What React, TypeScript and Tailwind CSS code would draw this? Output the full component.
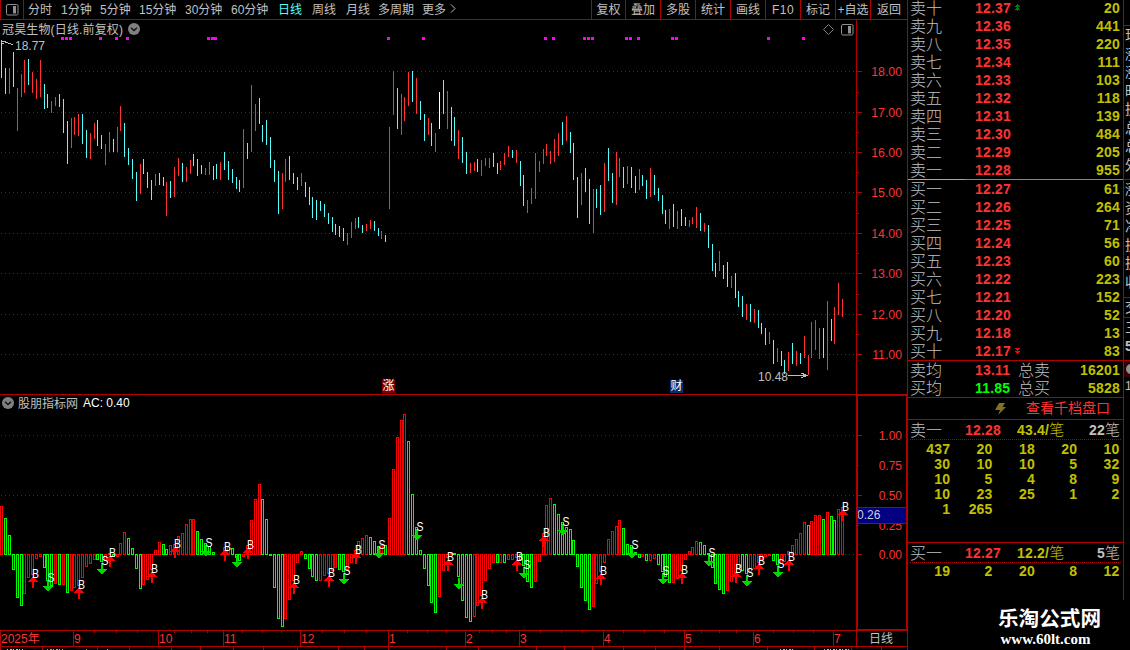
import { Fragment } from "react";
import clsx from "clsx";

type Tone = "r" | "g" | "c" | "w";

// [x, high, low, tone, ac level]; tone = candle colour, last field = histogram colour
type Bar = [number, number, number, Tone, number, "r" | "g"];

const BARS: Bar[] = [
  [1, 40, 78, "c", 506, "r"], [5, 68, 94, "c", 518, "g"], [9, 68, 94, "r", 535, "g"],
  [13, 52, 87, "c", 569, "g"], [17, 88, 131, "r", 597, "g"], [21, 74, 97, "r", 605, "g"],
  [24, 60, 93, "r", 593, "r"], [28, 59, 85, "c", 577, "r"], [32, 72, 93, "r", 574, "r"],
  [36, 79, 99, "r", 558, "r"], [40, 60, 97, "r", 556, "r"], [44, 84, 109, "c", 567, "g"],
  [47, 94, 108, "c", 580, "g"], [51, 101, 113, "r", 585, "g"], [55, 97, 106, "r", 583, "r"],
  [59, 94, 107, "c", 584, "g"], [63, 99, 133, "c", 584, "r"], [67, 121, 164, "c", 592, "g"],
  [71, 118, 148, "r", 590, "r"], [74, 117, 135, "r", 587, "r"], [78, 114, 136, "r", 585, "r"],
  [82, 114, 144, "c", 577, "r"], [86, 130, 158, "c", 566, "r"], [90, 133, 159, "r", 563, "r"],
  [94, 123, 139, "r", 559, "r"], [97, 120, 146, "c", 559, "g"], [101, 135, 149, "c", 561, "g"],
  [105, 144, 165, "r", 560, "r"], [109, 132, 152, "r", 553, "r"], [113, 139, 152, "c", 556, "g"],
  [117, 127, 152, "r", 556, "r"], [120, 106, 131, "r", 543, "r"], [124, 123, 157, "c", 532, "r"],
  [128, 148, 165, "c", 538, "g"], [132, 159, 179, "c", 548, "g"], [136, 172, 201, "c", 568, "g"],
  [140, 164, 194, "r", 588, "g"], [143, 159, 174, "c", 584, "r"], [147, 172, 188, "c", 579, "r"],
  [151, 180, 200, "c", 569, "r"], [155, 174, 186, "r", 550, "r"], [159, 173, 185, "c", 542, "r"],
  [163, 177, 186, "c", 544, "g"], [166, 182, 216, "r", 549, "g"], [170, 181, 198, "c", 545, "r"],
  [174, 167, 197, "r", 544, "r"], [178, 158, 176, "r", 536, "r"], [182, 163, 182, "c", 533, "r"],
  [186, 167, 182, "r", 524, "r"], [190, 160, 174, "r", 519, "r"], [193, 154, 166, "c", 519, "r"],
  [197, 159, 176, "c", 531, "g"], [201, 165, 174, "c", 539, "g"], [205, 168, 175, "r", 543, "g"],
  [209, 162, 175, "r", 546, "g"], [213, 166, 180, "c", 552, "g"], [216, 164, 179, "c", 554, "g"],
  [220, 162, 180, "r", 554, "r"], [224, 152, 170, "c", 547, "r"], [228, 161, 180, "c", 546, "r"],
  [232, 169, 183, "c", 548, "g"], [236, 177, 189, "c", 557, "g"], [239, 180, 192, "c", 560, "g"],
  [243, 129, 188, "r", 556, "r"], [247, 143, 159, "c", 545, "r"], [251, 85, 152, "r", 520, "r"],
  [255, 104, 131, "r", 499, "r"], [259, 98, 124, "c", 484, "r"], [262, 125, 142, "c", 499, "g"],
  [266, 120, 145, "c", 519, "g"], [270, 137, 168, "c", 555, "g"], [274, 160, 182, "c", 587, "g"],
  [278, 171, 214, "c", 618, "g"], [282, 173, 209, "r", 626, "g"], [285, 159, 182, "r", 618, "r"],
  [289, 156, 180, "c", 599, "r"], [293, 173, 184, "c", 580, "r"], [297, 177, 190, "c", 562, "r"],
  [301, 173, 186, "r", 551, "r"], [305, 182, 197, "c", 558, "g"], [309, 187, 205, "c", 568, "g"],
  [312, 197, 218, "c", 576, "g"], [316, 200, 220, "c", 580, "g"], [320, 201, 211, "c", 580, "r"],
  [324, 204, 217, "c", 575, "r"], [328, 213, 224, "c", 573, "r"], [332, 217, 232, "c", 570, "r"],
  [335, 224, 235, "c", 567, "r"], [339, 226, 237, "c", 569, "g"], [343, 228, 241, "c", 571, "g"],
  [347, 233, 245, "r", 569, "r"], [351, 222, 238, "r", 562, "r"], [355, 218, 229, "r", 550, "r"],
  [358, 217, 228, "c", 541, "r"], [362, 225, 233, "c", 538, "r"], [366, 224, 231, "r", 535, "r"],
  [370, 220, 229, "r", 537, "g"], [374, 221, 231, "c", 541, "g"], [378, 228, 236, "c", 546, "g"],
  [381, 231, 239, "r", 545, "r"], [385, 235, 242, "c", 545, "g"], [389, 127, 209, "r", 518, "r"],
  [393, 71, 115, "r", 469, "r"], [397, 88, 129, "c", 437, "r"], [401, 94, 135, "r", 420, "r"],
  [404, 97, 121, "r", 414, "r"], [408, 72, 106, "r", 441, "g"], [412, 71, 102, "c", 494, "g"],
  [416, 78, 114, "r", 527, "g"], [420, 101, 120, "c", 550, "g"], [424, 114, 141, "c", 568, "g"],
  [428, 118, 135, "r", 585, "g"], [431, 123, 146, "c", 602, "g"], [435, 133, 152, "r", 612, "g"],
  [439, 92, 129, "w", 596, "r"], [443, 80, 114, "c", 570, "r"], [447, 91, 129, "r", 557, "r"],
  [451, 107, 141, "c", 553, "r"], [454, 117, 146, "c", 553, "g"], [458, 130, 159, "r", 576, "g"],
  [462, 137, 163, "c", 600, "g"], [466, 152, 174, "c", 617, "g"], [470, 163, 173, "r", 621, "g"],
  [474, 162, 171, "r", 616, "r"], [477, 159, 172, "c", 605, "r"], [481, 160, 176, "r", 595, "r"],
  [485, 158, 166, "r", 580, "r"], [489, 158, 168, "r", 568, "r"], [493, 153, 167, "c", 562, "r"],
  [497, 163, 174, "c", 562, "g"], [500, 161, 170, "r", 562, "r"], [504, 153, 165, "r", 562, "g"],
  [508, 146, 157, "r", 559, "r"], [512, 150, 158, "c", 559, "r"], [516, 150, 163, "r", 557, "r"],
  [520, 161, 186, "c", 559, "g"], [523, 175, 206, "c", 565, "g"], [527, 200, 213, "r", 581, "g"],
  [531, 188, 204, "r", 587, "g"], [535, 153, 199, "r", 581, "r"], [539, 161, 172, "r", 561, "r"],
  [543, 149, 164, "r", 533, "r"], [546, 144, 156, "r", 505, "r"], [550, 151, 164, "r", 498, "r"],
  [554, 139, 162, "r", 504, "g"], [558, 133, 156, "r", 514, "g"], [562, 122, 145, "c", 522, "g"],
  [566, 116, 141, "r", 527, "g"], [570, 132, 153, "c", 529, "g"], [573, 143, 180, "c", 540, "g"],
  [577, 177, 218, "c", 566, "g"], [581, 173, 205, "r", 587, "g"], [585, 168, 192, "c", 600, "g"],
  [589, 179, 224, "c", 609, "g"], [593, 189, 233, "r", 606, "r"], [596, 189, 208, "c", 583, "r"],
  [600, 185, 215, "c", 571, "r"], [604, 163, 212, "r", 562, "r"], [608, 148, 181, "c", 539, "r"],
  [612, 173, 203, "c", 531, "r"], [616, 152, 205, "r", 526, "r"], [619, 158, 177, "r", 520, "r"],
  [623, 167, 188, "c", 528, "g"], [627, 166, 184, "r", 544, "g"], [631, 167, 188, "c", 545, "g"],
  [635, 176, 193, "c", 552, "g"], [639, 169, 190, "r", 557, "g"], [642, 175, 186, "c", 556, "r"],
  [646, 180, 199, "c", 560, "g"], [650, 168, 197, "r", 560, "r"], [654, 175, 195, "c", 558, "r"],
  [658, 188, 201, "c", 564, "g"], [662, 195, 214, "c", 571, "g"], [665, 210, 224, "c", 576, "g"],
  [669, 209, 229, "r", 582, "g"], [673, 204, 227, "c", 582, "r"], [677, 211, 229, "r", 578, "r"],
  [681, 209, 226, "c", 570, "r"], [685, 217, 226, "c", 559, "r"], [689, 220, 227, "r", 551, "r"],
  [692, 217, 224, "r", 547, "r"], [696, 207, 228, "r", 541, "r"], [700, 213, 231, "c", 542, "g"],
  [704, 223, 232, "r", 545, "g"], [708, 225, 248, "c", 553, "g"], [712, 244, 271, "c", 567, "g"],
  [715, 263, 277, "c", 583, "g"], [719, 251, 271, "r", 589, "g"], [723, 265, 279, "c", 593, "g"],
  [727, 262, 287, "c", 590, "r"], [731, 276, 288, "r", 581, "r"], [735, 273, 298, "c", 573, "r"],
  [738, 291, 307, "c", 569, "r"], [742, 296, 317, "c", 570, "g"], [746, 304, 320, "r", 573, "g"],
  [750, 304, 322, "c", 571, "r"], [754, 309, 323, "r", 568, "r"], [758, 310, 328, "c", 562, "r"],
  [761, 323, 334, "c", 559, "r"], [765, 328, 345, "c", 556, "r"], [769, 332, 344, "r", 555, "r"],
  [773, 340, 364, "c", 560, "g"], [777, 348, 362, "r", 564, "g"], [781, 351, 366, "c", 563, "r"],
  [784, 360, 374, "c", 561, "r"], [788, 352, 371, "r", 551, "r"], [792, 343, 364, "c", 545, "r"],
  [796, 351, 366, "r", 539, "r"], [800, 353, 364, "c", 533, "r"], [804, 336, 358, "r", 522, "r"],
  [808, 355, 375, "r", 525, "g"], [811, 322, 358, "r", 521, "r"], [815, 320, 350, "r", 515, "r"],
  [819, 328, 359, "r", 515, "r"], [823, 328, 358, "c", 519, "g"], [827, 301, 370, "r", 512, "r"],
  [831, 319, 341, "c", 516, "g"], [834, 307, 344, "r", 520, "g"], [838, 283, 315, "r", 509, "r"],
  [842, 299, 317, "r", 507, "r"],
];

const ZERO = 554;

const FILL: Record<Tone, string> = { r: "#ff3232", g: "#00ff00", c: "#54fcfc", w: "#ffffff" };

const BUYS = [
  [33, 576], [79, 587], [110, 555], [152, 571], [175, 546], [225, 549], [248, 547],
  [294, 582], [329, 575], [356, 552], [448, 559], [482, 597], [517, 559], [544, 535],
  [601, 573], [682, 572], [736, 571], [759, 563], [789, 559], [843, 509],
];

// third value: whether the S letter is shown
const SELLS: [number, number, boolean][] = [
  [48, 592, true], [102, 575, true], [206, 557, true], [237, 568, false], [344, 585, true],
  [379, 559, true], [417, 541, true], [459, 590, false], [524, 579, true], [563, 536, true],
  [632, 559, true], [663, 585, true], [709, 567, true], [747, 587, true], [778, 578, true],
];

const DOTS = [
  61, 65, 69, 99, 115, 126, 207, 211, 214, 387, 422, 544, 552, 583, 587, 591, 625, 629, 637,
  671, 675, 767, 802,
];

const PRICE_TICKS: [number, string][] = [
  [71, "18.00"], [112, "17.00"], [152, "16.00"], [192, "15.00"],
  [233, "14.00"], [273, "13.00"], [314, "12.00"], [354, "11.00"],
];
const PRICE_MINOR = [92, 132, 172, 213, 253, 294, 334];

const AC_TICKS: [number, string][] = [
  [435, "1.00"], [465, "0.75"], [495, "0.50"], [525, "0.25"], [554, "0.00"],
];

const MONTHS: [number, string][] = [
  [73, "9"], [158, "10"], [223, "11"], [300, "12"], [388, "1"], [465, "2"],
  [519, "3"], [603, "4"], [684, "5"], [753, "6"], [833, "7"],
];
const WEEKS = [
  94, 116, 137, 174, 191, 207, 242, 262, 281, 322, 344, 366, 407, 427, 446, 479, 492, 506,
  540, 561, 582, 623, 644, 664, 701, 719, 736, 773, 793, 813,
];
const TAB_SEPS = [
  42, 97, 129, 171, 200, 233, 263, 297, 338, 364, 388, 446, 478, 536, 564, 592, 623, 655,
  684, 719, 767, 814, 851, 881,
];

const PERIODS = [
  { label: "分时", w: "w-[33px]" },
  { label: "1分钟", w: "w-[39px]" },
  { label: "5分钟", w: "w-[39px]" },
  { label: "15分钟", w: "w-[46px]" },
  { label: "30分钟", w: "w-[46px]" },
  { label: "60分钟", w: "w-[47px]" },
  { label: "日线", w: "w-[34px]", active: true },
  { label: "周线", w: "w-[34px]" },
  { label: "月线", w: "w-[32px]" },
  { label: "多周期", w: "w-[44px]" },
  { label: "更多", w: "w-[28px]" },
];

const TOOLS = [
  { label: "复权", w: "w-[34px]" },
  { label: "叠加", w: "w-[35px]" },
  { label: "多股", w: "w-[35px]" },
  { label: "统计", w: "w-[35px]" },
  { label: "画线", w: "w-[35px]" },
  { label: "F10", w: "w-[35px] tracking-[0.5px]" },
  { label: "标记", w: "w-[35px]" },
  { label: "+自选", w: "w-[35px]" },
  { label: "返回", w: "w-[37px]" },
];

const ASKS = [
  ["卖十", "12.37", "20"], ["卖九", "12.36", "441"], ["卖八", "12.35", "220"],
  ["卖七", "12.34", "111"], ["卖六", "12.33", "103"], ["卖五", "12.32", "118"],
  ["卖四", "12.31", "139"], ["卖三", "12.30", "484"], ["卖二", "12.29", "205"],
  ["卖一", "12.28", "955"],
];

const BIDS = [
  ["买一", "12.27", "61"], ["买二", "12.26", "264"], ["买三", "12.25", "71"],
  ["买四", "12.24", "56"], ["买五", "12.23", "60"], ["买六", "12.22", "223"],
  ["买七", "12.21", "152"], ["买八", "12.20", "52"], ["买九", "12.18", "13"],
  ["买十", "12.17", "83"],
];

const ASK_QUEUE = [
  "437", "20", "18", "20", "10",
  "30", "10", "10", "5", "32",
  "10", "5", "4", "8", "9",
  "10", "23", "25", "1", "2",
  "1", "265",
];
const BID_QUEUE = ["19", "2", "20", "8", "12"];

const NUM = "font-['Liberation_Sans'] text-[14px] font-bold tracking-[0.2px]";
const LABEL = "pt-0.5 text-[16px] font-light text-[#c0c0c0]";
const AXIS_FONT = "'Liberation Sans', sans-serif";

function GridLine({ y }: { y: number }) {
  return (
    <line x1="1" x2="856" y1={y + 0.5} y2={y + 0.5} stroke="#b00000" strokeDasharray="1 3" />
  );
}

function PanelIcon() {
  return (
    <svg width="13" height="12" viewBox="0 0 13 12" fill="none">
      <rect x="0.5" y="0.5" width="11.5" height="10.5" rx="1.5" stroke="#909090" />
      <rect x="7" y="2" width="3" height="7.5" fill="#909090" />
    </svg>
  );
}

function Collapse() {
  return (
    <svg width="12" height="12" viewBox="0 0 12 12">
      <circle cx="6" cy="6" r="6" fill="#808080" />
      <path d="M3 4.8 6 7.6 9 4.8" fill="none" stroke="#101010" strokeWidth="1.4" />
    </svg>
  );
}

function Toolbar() {
  return (
    <div className="flex h-5 shrink-0 border-b border-[#b00000] text-[12px] leading-[20px] text-[#c0c0c0]">
      <div className="flex w-6 items-center justify-center border-x border-[#b00000]">
        <PanelIcon />
      </div>
      <div className="flex pl-1">
        {PERIODS.map((p) => (
          <span
            key={p.label}
            className={clsx("shrink-0 whitespace-nowrap", p.w, p.active && "text-[#54fcfc]")}
          >
            {p.label}
          </span>
        ))}
        <svg width="6" height="19" viewBox="0 0 6 19" fill="none" stroke="#c0c0c0">
          <path d="M1 4.5 5 8.5 1 12.5" />
        </svg>
      </div>
      <div className="ml-auto flex h-[19px]">
        {TOOLS.map((t) => (
          <span
            key={t.label}
            className={clsx("shrink-0 whitespace-nowrap border-l border-[#b00000] text-center", t.w)}
          >
            {t.label}
          </span>
        ))}
      </div>
    </div>
  );
}

function PriceChart() {
  return (
    <div className="relative h-[375px] shrink-0">
      <svg width="907" height="375" viewBox="0 20 907 375" shapeRendering="crispEdges">
        {PRICE_TICKS.map(([y, label]) => (
          <Fragment key={label}>
            <GridLine y={y} />
            <rect x="857" y={y} width="5" height="1" fill="#b00000" />
            <text
              x="902"
              y={y + 5}
              textAnchor="end"
              fontFamily={AXIS_FONT}
              fontSize="12.3"
              fill="#ff3232"
            >
              {label}
            </text>
          </Fragment>
        ))}
        {PRICE_MINOR.map((y) => (
          <rect key={y} x="857" y={y} width="2" height="1" fill="#b00000" />
        ))}
        {DOTS.map((x) => (
          <rect key={x} x={x} y="37" width="3" height="3" fill="#ff00ff" />
        ))}
        {BARS.map(([x, hi, lo, tone]) => (
          <rect key={x} x={x} y={hi} width="1" height={lo - hi} fill={FILL[tone]} />
        ))}
        <rect x="856" y="20" width="1" height="375" fill="#b00000" />
        <rect x="0" y="394" width="907" height="1" fill="#b00000" />

        <g fill="none" stroke="#c0c0c0">
          <path d="M1.5 41.5h4M1.5 43.5h2M5 42l4 1.5 4 1" />
          <path d="M788 375.5h18M801 373l6 2.5-6 2.5" />
        </g>
        <g fontFamily={AXIS_FONT} fontSize="12" fill="#c0c0c0">
          <text x="15" y="50">18.77</text>
          <text x="758" y="381">10.48</text>
        </g>
        <path
          d="M828.5 24.5l5 5-5 5-5-5z"
          fill="none"
          stroke="#808080"
          shapeRendering="auto"
        />
      </svg>
      <div className="absolute left-[2px] top-0 flex h-[18px] items-center gap-1.5 text-[12px] text-[#c0c0c0]">
        <span className="w-[120px] whitespace-nowrap pt-px tracking-[0.15px]">
          冠昊生物(日线.前复权)
        </span>
        <Collapse />
      </div>
      <div className="absolute left-[841px] top-1">
        <PanelIcon />
      </div>
      <span className="absolute left-[382px] top-[360px] h-[13px] w-[13px] bg-[#800000] text-center text-[12px] leading-[13px] text-white">
        涨
      </span>
      <span className="absolute left-[670px] top-[360px] h-[13px] w-[13px] bg-[#003070] text-center text-[12px] leading-[13px] text-white">
        财
      </span>
    </div>
  );
}

function AcChart() {
  return (
    <div className="relative h-[235px] shrink-0">
      <svg width="907" height="235" viewBox="0 395 907 235" shapeRendering="crispEdges">
        <GridLine y={435} />
        <GridLine y={495} />
        <GridLine y={554} />
        {BARS.map(([x, , , , level, tone]) => (
          <rect
            key={x}
            x={x - 0.5}
            y={Math.min(level, ZERO) + 0.5}
            width="2"
            height={Math.abs(level - ZERO)}
            fill="#000"
            stroke={tone === "r" ? "#ff0000" : "#00ff00"}
          />
        ))}
        {BUYS.map(([x, y]) => (
          <g key={x} fill="#ff0000">
            <path d={`M${x} ${y}l5 6h-10z`} />
            <rect x={x - 1} y={y + 5} width="2" height="7" />
          </g>
        ))}
        {SELLS.map(([x, y]) => (
          <g key={x} fill="#00d800">
            <path d={`M${x} ${y}l5 -6h-10z`} />
            <rect x={x - 1} y={y - 12} width="2" height="7" />
          </g>
        ))}
        <g fontFamily={AXIS_FONT} fontSize="12" fill="#ffffff">
          {BUYS.map(([x, y]) => (
            <text key={x} x={x - 1} y={y + 2} textLength="7" lengthAdjust="spacingAndGlyphs">
              B
            </text>
          ))}
          {SELLS.filter((s) => s[2]).map(([x, y]) => (
            <text key={x} x={x - 0.5} y={y - 10} textLength="7" lengthAdjust="spacingAndGlyphs">
              S
            </text>
          ))}
        </g>

        {AC_TICKS.map(([y, label], i) => (
          <Fragment key={label}>
            <rect x="858" y={y} width={i % 2 ? 1 : 4} height="1" fill="#b00000" />
            <text
              x="902"
              y={y + 5}
              textAnchor="end"
              fontFamily={AXIS_FONT}
              fontSize="12"
              fill="#ff3232"
            >
              {label}
            </text>
          </Fragment>
        ))}
        <rect x="857" y="507" width="50" height="17" fill="#b00000" />
        <rect x="858" y="508" width="48" height="15" fill="#000080" />
        <text x="857" y="519" fontFamily={AXIS_FONT} fontSize="12" fill="#d0d0d0">
          0.26
        </text>
        <rect x="856" y="395" width="2" height="235" fill="#b00000" />
        <rect x="906" y="395" width="1" height="235" fill="#b00000" />
        <rect x="856" y="395" width="51" height="1" fill="#b00000" />
        <rect x="856" y="629" width="51" height="1" fill="#b00000" />
      </svg>
      <div className="absolute left-[2px] top-0 flex h-4 items-center text-[12px]">
        <Collapse />
        <span className="ml-1 w-[65px] whitespace-nowrap pt-px text-[#c0c0c0]">股朋指标网</span>
        <span className="whitespace-nowrap text-white">AC: 0.40</span>
      </div>
    </div>
  );
}

function DateAxis() {
  return (
    <svg
      width="907"
      height="20"
      viewBox="0 630 907 20"
      shapeRendering="crispEdges"
      className="block shrink-0"
    >
      <g fill="#b00000">
        <rect x="0" y="630" width="907" height="1" />
        <rect x="0" y="646" width="907" height="1" />
        <rect x="0" y="630" width="1" height="20" />
        <rect x="856" y="630" width="1" height="17" />
        {WEEKS.map((x) => (
          <rect key={x} x={x} y="631" width="1" height="2" />
        ))}
        {MONTHS.map(([x]) => (
          <rect key={x} x={x} y="631" width="1" height="15" />
        ))}
        {TAB_SEPS.map((x) => (
          <rect key={x} x={x} y="647" width="1" height="3" />
        ))}
      </g>
      <g fontFamily="'Liberation Sans', 'Noto Sans CJK SC', sans-serif" fontSize="12" fill="#ff3232">
        <text x="1" y="643">2025年</text>
        {MONTHS.map(([x, label]) => (
          <text key={x} x={x + 1} y="643">
            {label}
          </text>
        ))}
        <text x="869" y="643" fill="#c0c0c0">
          日线
        </text>
      </g>
      <g strokeDasharray="1 2 2 1" strokeWidth="1">
        <path d="M7 649.5h16M107 649.5h3M780 649.5h14M824 649.5h26" stroke="#c0c0c0" />
        <path d="M47 649.5h16M86 649.5h2" stroke="#c0c000" />
      </g>
    </svg>
  );
}

function BookRow({ row, arrow }: { row: string[]; arrow?: "up" | "down" }) {
  return (
    <div className="flex h-[18px] items-center pl-0.5 pr-[3px]">
      <span className={clsx(LABEL, "w-[65px]")}>{row[0]}</span>
      <span className={clsx(NUM, "w-[37px] text-[#ff3232]")}>{row[1]}</span>
      {arrow && (
        <svg width="8" height="8" viewBox="0 0 8 8" shapeRendering="crispEdges" className="ml-0.5">
          {arrow === "up" ? (
            <path d="M3 0h1l2 3h-5zM3 3h1l2 3h-5zM3 6h1v1h-1z" fill="#008000" />
          ) : (
            <path d="M1 1h5v1h-5zM2 2h3l-1 2h-1zM1 4h5l-2 3h-1z" fill="#ff0000" />
          )}
        </svg>
      )}
      <span className={clsx(NUM, "ml-auto text-[#c0c000]")}>{row[2]}</span>
    </div>
  );
}

function AverageRow({ row, green }: { row: string[]; green?: boolean }) {
  return (
    <div className="flex h-[18px] items-center pl-0.5 pr-[3px]">
      <span className={clsx(LABEL, "w-[65px]")}>{row[0]}</span>
      <span className={clsx(NUM, "w-[43px]", green ? "text-[#00ff00]" : "text-[#ff3232]")}>
        {row[1]}
      </span>
      <span className={LABEL}>{row[2]}</span>
      <span className={clsx(NUM, "ml-auto text-[#c0c000]")}>{row[3]}</span>
    </div>
  );
}

function QueueHeader({ row }: { row: string[] }) {
  return (
    <div className="mx-0.5 flex h-5 items-center border-b border-dotted border-[#b00000] pr-px">
      <span className={clsx(LABEL, "w-[55px]")}>{row[0]}</span>
      <span className={clsx(NUM, "w-[52px] pt-px text-[#ff3232]")}>{row[1]}</span>
      <span className="flex items-center pt-px text-[#c0c000]">
        <span className={NUM}>{row[2]}</span>
        <span className="pt-px text-[15px] font-light">笔</span>
      </span>
      <span className="ml-auto flex items-center pt-px text-[#c0c0c0]">
        <span className={NUM}>{row[3]}</span>
        <span className="pt-px text-[15px] font-light">笔</span>
      </span>
    </div>
  );
}

function Queue({ items }: { items: string[] }) {
  return (
    <div className="grid grid-cols-5 pr-[3.5px] pt-0.5">
      {items.map((n, i) => (
        <span key={i} className={clsx(NUM, "text-right leading-[15px] text-[#c0c000]")}>
          {n}
        </span>
      ))}
    </div>
  );
}

function OrderBook() {
  return (
    <div className="flex w-[216px] shrink-0 flex-col">
      <div className="flex h-[600px] flex-col border-r border-[#b00000]">
        <div className="-mt-px">
          {ASKS.map((row, i) => (
            <BookRow key={row[0]} row={row} arrow={i === 0 ? "up" : undefined} />
          ))}
        </div>
        <div className="flex h-px shrink-0">
          <div className="w-[57px] bg-[#e0a040]" />
          <div className="flex-1 bg-[#5090e0]" />
        </div>
        {BIDS.map((row, i) => (
          <BookRow key={row[0]} row={row} arrow={i === 9 ? "down" : undefined} />
        ))}
        <div className="h-[38px] border-y border-[#b00000]">
          <AverageRow row={["卖均", "13.11", "总卖", "16201"]} />
          <AverageRow row={["买均", "11.85", "总买", "5828"]} green />
        </div>
        <div className="flex h-[22px] items-center justify-end border-b border-[#b00000] pr-[13px]">
          <svg width="11" height="12" viewBox="0 0 11 12" className="mr-5">
            <path d="M4 0h6L7.5 4H11L3 12l2-5H0z" fill="#807028" />
          </svg>
          <span className="text-[14px] text-[#ff3232]">查看千档盘口</span>
        </div>
        <div className="h-[123px] border-b border-[#b00000]">
          <QueueHeader row={["卖一", "12.28", "43.4/", "22"]} />
          <Queue items={ASK_QUEUE} />
        </div>
        <QueueHeader row={["买一", "12.27", "12.2/", "5"]} />
        <div className="-mt-px">
          <Queue items={BID_QUEUE} />
        </div>
      </div>
      <div className="flex flex-1 flex-col items-center pl-[67px] pt-[5px] text-white">
        <span className="whitespace-nowrap text-[20.6px] font-bold leading-[27px]">乐淘公式网</span>
        <span className="-ml-2 font-['Liberation_Serif'] text-[15px] font-bold leading-[14px]">
          www.60lt.com
        </span>
      </div>
    </div>
  );
}

// Left edge of the next panel, cut off by the window
function SideStrip() {
  return (
    <div className="flex w-[6px] shrink-0 flex-col overflow-hidden text-[14px] leading-[18.5px] text-[#c0c0c0]">
      <div className="h-[26px] shrink-0 border-b border-[#b00000]" />
      <div className="h-[154px] shrink-0 overflow-hidden border-b border-[#b00000] pl-px">
        {["现", "涨", "涨", "昨", "换", "总", "总", "外"].map((c, i) => (
          <div key={i} className="w-4">{c}</div>
        ))}
      </div>
      <div className="h-[118px] shrink-0 overflow-hidden border-b border-[#b00000] pl-px">
        {["涨", "资", "净", "换", "换", "收"].map((c, i) => (
          <div key={i} className="w-4">{c}</div>
        ))}
      </div>
      <div className="h-5 shrink-0 overflow-hidden border-b border-[#b00000] pl-px">
        <div className="w-4">交</div>
      </div>
      <div className="h-[43px] shrink-0 overflow-hidden border-b border-[#b00000] pl-px">
        <div className="w-4">三</div>
        <div className="w-4 font-bold">5</div>
      </div>
      <div className="flex h-4 shrink-0 items-center bg-[#300008] pl-0.5">
        <div className="h-2.5 w-2.5 shrink-0 rounded-full bg-[#909090]" />
      </div>
      <div className="pl-px text-[12px]">1</div>
    </div>
  );
}

export default function App() {
  return (
    <div className="flex h-[650px] w-[1130px] overflow-hidden bg-black font-['Liberation_Sans','Noto_Sans_CJK_SC',sans-serif]">
      <div className="flex w-[908px] shrink-0 flex-col border-r border-[#b00000]">
        <Toolbar />
        <PriceChart />
        <AcChart />
        <DateAxis />
      </div>
      <OrderBook />
      <SideStrip />
    </div>
  );
}
